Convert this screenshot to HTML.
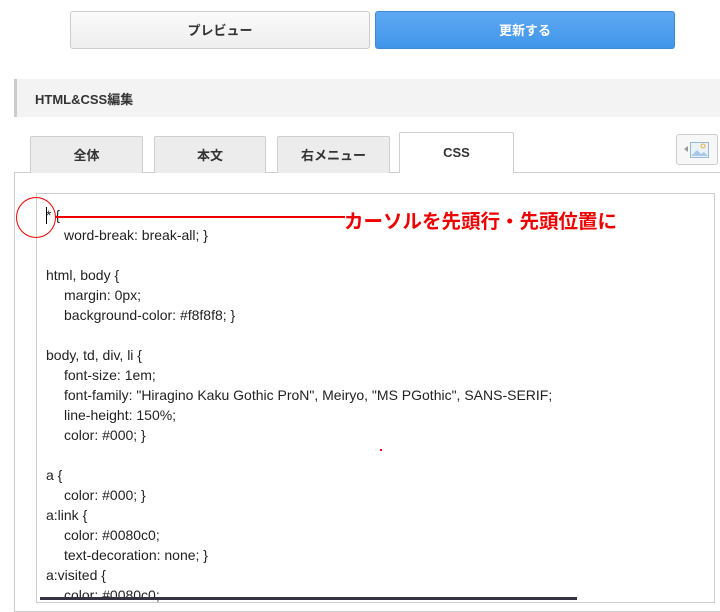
<!DOCTYPE html>
<html><head><meta charset="utf-8"><style>
body{margin:0;width:720px;height:599px;overflow:hidden;background:#fff;font-family:"Liberation Sans","Noto Sans CJK JP",sans-serif;position:relative}
.a{position:absolute;box-sizing:border-box}
.btn{top:11px;height:38px;border-radius:3px;font-size:13px;font-weight:bold;display:flex;align-items:center;justify-content:center;padding-bottom:2px}
.tab{top:136px;height:37px;background:#ececec;border:1px solid #cfcfcf;border-bottom:none;font-size:13px;font-weight:bold;color:#333;display:flex;align-items:center;justify-content:center;border-radius:2px 2px 0 0;padding-bottom:2px}
.code{font-size:14px;color:#222;line-height:20px;white-space:pre}
.i{padding-left:18px}
</style></head><body>
<div class="a btn" style="left:70px;width:300px;background:linear-gradient(#fafafa,#eee);border:1px solid #ccc;color:#333">プレビュー</div>
<div class="a btn" style="left:375px;width:300px;background:linear-gradient(#5ea8f2,#4196ea);border:1px solid #3d8ad8;color:#fff">更新する</div>
<div class="a" style="left:14px;top:79px;width:706px;height:38px;background:#f3f3f3;border-left:3px solid #ccc;font-size:13px;font-weight:bold;color:#333;padding:10px 0 0 18px">HTML&amp;CSS編集</div>
<div class="a" style="left:14px;top:172px;width:710px;height:440px;border:1px solid #ccc;border-right:none"></div>
<div class="a tab" style="left:30px;width:113px">全体</div>
<div class="a tab" style="left:154px;width:112px">本文</div>
<div class="a tab" style="left:277px;width:113px">右メニュー</div>
<div class="a tab" style="left:399px;top:132px;height:41px;width:115px;background:#fff">CSS</div>
<div class="a" style="left:676px;top:134px;width:42px;height:31px;border:1px solid #ccc;border-radius:3px;background:#f7f7f7">
<svg width="40" height="29" style="position:absolute;left:0;top:0"><path d="M7 14l4-3v6z" fill="#999"/><rect x="13.5" y="7.5" width="18" height="15" fill="#e8f2fb" stroke="#9bb8d3"/><circle cx="26" cy="11" r="2" fill="none" stroke="#f0b030"/><path d="M14 21l6-6 4 4 3-2 4 4z" fill="#a8c8e6"/></svg></div>
<div class="a" style="left:36px;top:193px;width:679px;height:410px;border:1px solid #ccc"></div>
<div class="a code" style="left:46px;top:205px"><div>* {</div><div class="i">word-break: break-all; }</div><div>&nbsp;</div><div>html, body {</div><div class="i">margin: 0px;</div><div class="i">background-color: #f8f8f8; }</div><div>&nbsp;</div><div>body, td, div, li {</div><div class="i">font-size: 1em;</div><div class="i">font-family: "Hiragino Kaku Gothic ProN", Meiryo, "MS PGothic", SANS-SERIF;</div><div class="i">line-height: 150%;</div><div class="i">color: #000; }</div><div>&nbsp;</div><div>a {</div><div class="i">color: #000; }</div><div>a:link {</div><div class="i">color: #0080c0;</div><div class="i">text-decoration: none; }</div><div>a:visited {</div><div class="i">color: #0080c0;</div></div>
<div class="a" style="left:46px;top:207px;width:1px;height:17px;background:#000"></div>
<div class="a" style="left:16px;top:197px;width:40px;height:41px;border:1.5px solid #e00;border-radius:50%"></div>
<div class="a" style="left:55px;top:216px;width:290px;height:2px;background:#e00"></div>
<div class="a" style="left:344px;top:205px;font-size:19.5px;font-weight:bold;color:#e00;white-space:nowrap">カーソルを先頭行・先頭位置に</div>
<div class="a" style="left:380px;top:449px;width:2px;height:2px;background:#e00"></div>
<div class="a" style="left:40px;top:597px;width:537px;height:3px;background:#334"></div>
</body></html>
